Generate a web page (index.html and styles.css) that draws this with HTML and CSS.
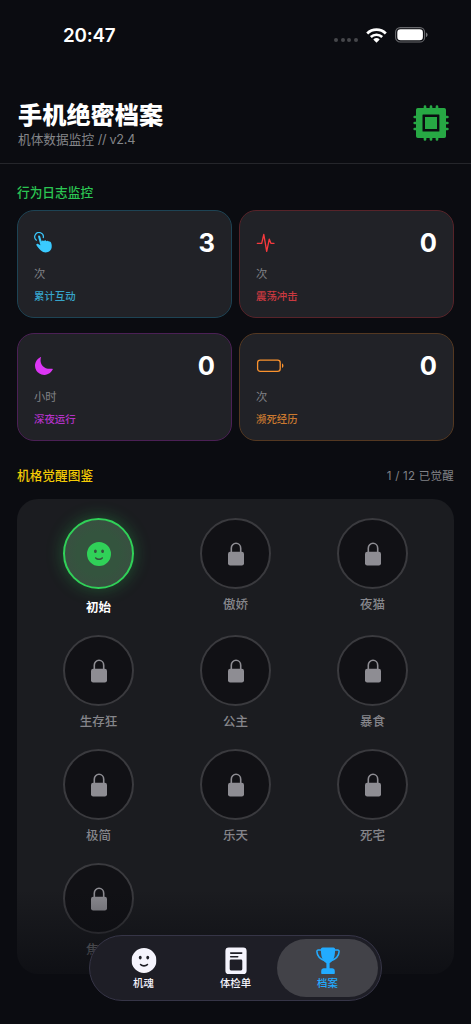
FILE: index.html
```html
<!DOCTYPE html>
<html lang="zh-CN">
<head>
<meta charset="utf-8">
<title>手机绝密档案</title>
<link rel="stylesheet" href="styles.css">
</head>
<body>
<svg class="defs" aria-hidden="true">
  <symbol id="lock" viewBox="0 0 18 24">
    <path d="M4.300 11V6.200a4.700 4.900 0 0 1 9.400 0V11" fill="none" stroke="currentColor" stroke-width="1.600"/>
    <rect x="1" y="9.800" width="16" height="13.600" rx="2.200" fill="currentColor"/>
  </symbol>
  <symbol id="face" viewBox="0 0 24 24">
    <path fill-rule="evenodd" fill="currentColor" d="M12 0a12 12 0 1 1 0 24a12 12 0 0 1 0-24zM8.400 7.400c-.8 0-1.400.8-1.400 1.800s.6 1.800 1.400 1.800s1.400-.8 1.400-1.800s-.6-1.800-1.400-1.800zM15.600 7.400c-.8 0-1.400.8-1.400 1.800s.6 1.800 1.400 1.800s1.400-.8 1.400-1.800s-.6-1.800-1.400-1.800zM8.300 15.300c-.5.4-.4.8-.1 1.100c2 2 5.600 2 7.600 0c.3-.3.400-.7-.1-1.100c-.3-.2-.6-.1-.9.1c-1.600 1.300-4 1.300-5.600 0c-.3-.2-.6-.3-.9-.1z"/>
  </symbol>
</svg>
<div class="screen">
  <div class="status">
    <span class="time">20:47</span>
    <div class="status-icons">
      <div class="dots"><i></i><i></i><i></i><i></i></div>
      <svg class="wifi" viewBox="0 0 21 15" fill="none" stroke="#fff">
        <path d="M1.200 5.400a13.400 13.400 0 0 1 18.600 0" stroke-width="2.800"/>
        <path d="M4.800 9a8.300 8.300 0 0 1 11.400 0" stroke-width="2.600"/>
        <path d="M10.500 14.800L7.300 11.500a4.700 4.700 0 0 1 6.400 0z" fill="#fff" stroke="none"/>
      </svg>
      <svg class="power" viewBox="0 0 33 16">
        <rect x=".6" y=".6" width="29" height="14.400" rx="4.600" fill="none" stroke="#68696d" stroke-width="1.100"/>
        <rect x="2.300" y="2.300" width="25.600" height="11" rx="3.200" fill="#fff"/>
        <path d="M31 5.500v4.600c2.100-.8 2.100-3.800 0-4.600z" fill="#77787c"/>
      </svg>
    </div>
  </div>

  <header class="header">
    <div>
      <h1 class="title">手机绝密档案</h1>
      <p class="subtitle">机体数据监控 <span class="version">// v2.4</span></p>
    </div>
    <svg class="chip" viewBox="0 0 36 36">
      <path d="M12 1.700V6M18 1.700V6M24 1.700V6M12 30v4.400M18 30v4.400M24 30v4.400M1.700 12H6M1.700 18H6M1.700 24H6M30 12h4.400M30 18h4.400M30 24h4.400" stroke="#27a844" stroke-width="2.700" stroke-linecap="round"/>
      <path fill="#27a844" fill-rule="evenodd" d="M4.800 3h26.400a1.800 1.800 0 0 1 1.800 1.800v26.400a1.800 1.800 0 0 1-1.800 1.800H4.800A1.800 1.800 0 0 1 3 31.200V4.800A1.800 1.800 0 0 1 4.800 3zM10 9.600q-.5 0-.5.5v15.800q0 .5.500.500h15.900q.5 0 .5-.5V10.100q0-.5-.5-.5zM12 11.900h12v12.200H12z"/>
    </svg>
  </header>

  <main class="content">
    <h2 class="section-title green">行为日志监控</h2>
    <section class="stats">
      <article class="card cyan">
        <div class="card-top">
          <svg class="stat-icon" viewBox="0 0 20 22">
            <path d="M2.400 8.200A4.300 4.300 0 1 1 9.300 5.600" fill="none" stroke="currentColor" stroke-width="1.200" stroke-linecap="round"/>
            <path fill="currentColor" d="M4.100 4.700c-.2-1.300 1.600-1.800 2-.5l1.600 5.200c.2-1.200 1.800-1.400 2.300-.3c.5-1.100 2.100-1 2.400.1c.7-.9 2.100-.6 2.500.4c.9-.4 1.900.2 2.300 1.300c1 2.800.8 5.800-1.200 7.900c-2.500 2.400-6.700 2.200-9.100-.3c-1.700-1.600-3.200-3.600-4.300-5.100c-.9-1.300.4-2.200 1.600-1.500l2.200 1.300z"/>
          </svg>
          <strong>3</strong>
        </div>
        <p class="unit">次</p><p class="label">累计互动</p>
      </article>
      <article class="card red">
        <div class="card-top">
          <svg class="stat-icon" viewBox="0 0 20 22">
            <path d="M1.300 11.300H5.700L7.800 2.500L10.700 19.400L13.300 7.200L14.900 11.300H18" fill="none" stroke="currentColor" stroke-width="1.350" stroke-linecap="round" stroke-linejoin="round"/>
          </svg>
          <strong>0</strong>
        </div>
        <p class="unit">次</p><p class="label">震荡冲击</p>
      </article>
      <article class="card purple">
        <div class="card-top">
          <svg class="stat-icon" viewBox="0 0 20 22">
            <path d="M7.100 2C5 8 9 15 18.100 13.700C19 13.600 18.900 14.200 18.700 14.600A9.300 9.300 0 1 1 6.300 2.200Q7 1.800 7.100 2z" fill="currentColor"/>
          </svg>
          <strong>0</strong>
        </div>
        <p class="unit">小时</p><p class="label">深夜运行</p>
      </article>
      <article class="card orange">
        <div class="card-top">
          <svg class="stat-icon wide" viewBox="0 0 28 22">
            <rect x="1.600" y="5.200" width="22.600" height="11.200" rx="2.600" fill="none" stroke="currentColor" stroke-width="1.300"/>
            <path d="M26 8.600v4.400c1.900-.5 1.900-3.900 0-4.400z" fill="currentColor"/>
          </svg>
          <strong>0</strong>
        </div>
        <p class="unit">次</p><p class="label">濒死经历</p>
      </article>
    </section>

    <div class="section-row">
      <h2 class="section-title yellow">机格觉醒图鉴</h2>
      <span class="count">1 / 12 已觉醒</span>
    </div>
    <section class="gallery">
      <div class="badge active"><div class="ring"><svg class="face"><use href="#face"/></svg></div><span>初始</span></div>
      <div class="badge"><div class="ring"><svg class="lock"><use href="#lock"/></svg></div><span>傲娇</span></div>
      <div class="badge"><div class="ring"><svg class="lock"><use href="#lock"/></svg></div><span>夜猫</span></div>
      <div class="badge"><div class="ring"><svg class="lock"><use href="#lock"/></svg></div><span>生存狂</span></div>
      <div class="badge"><div class="ring"><svg class="lock"><use href="#lock"/></svg></div><span>公主</span></div>
      <div class="badge"><div class="ring"><svg class="lock"><use href="#lock"/></svg></div><span>暴食</span></div>
      <div class="badge"><div class="ring"><svg class="lock"><use href="#lock"/></svg></div><span>极简</span></div>
      <div class="badge"><div class="ring"><svg class="lock"><use href="#lock"/></svg></div><span>乐天</span></div>
      <div class="badge"><div class="ring"><svg class="lock"><use href="#lock"/></svg></div><span>死宅</span></div>
      <div class="badge"><div class="ring"><svg class="lock"><use href="#lock"/></svg></div><span>焦虑</span></div>
    </section>
  </main>

  <div class="fade"></div>
  <nav class="tabs">
    <a class="tab"><svg class="tab-icon" viewBox="0 0 28 28"><use href="#face" x="1.500" y="1" width="25" height="25"/></svg><span>机魂</span></a>
    <a class="tab"><svg class="tab-icon" viewBox="0 0 28 28">
      <path fill="currentColor" fill-rule="evenodd" d="M6.800.500h14.400a3.400 3.400 0 0 1 3.400 3.400v19.800a3.400 3.400 0 0 1-3.400 3.400H6.800a3.400 3.400 0 0 1-3.400-3.400V3.900A3.400 3.400 0 0 1 6.800.500zM8.700 5.300a.8.800 0 0 0 0 1.600h11a.8.800 0 0 0 0-1.600zM8.700 9a.8.800 0 0 0 0 1.600h7a.8.800 0 0 0 0-1.600zM9 12.600q-1.300 0-1.300 1.300v8.200q0 1.300 1.300 1.300h10q1.300 0 1.300-1.300v-8.200q0-1.300-1.300-1.300z"/>
    </svg><span>体检单</span></a>
    <a class="tab selected"><svg class="tab-icon" viewBox="0 0 28 28">
      <path fill="currentColor" d="M8.600.500h10.800q1.700 0 1.700 1.600c0 6.500-.9 11.500-5.500 14.200v5h2.800q2.400 0 2.400 2.500v2.100q0 1.200-1.200 1.200H8.400q-1.200 0-1.200-1.200v-2.100q0-2.500 2.400-2.500h2.800v-5C7.800 13.600 6.900 8.600 6.900 2.100Q6.900.500 8.600.500z"/>
      <path fill="none" stroke="currentColor" stroke-width="1.500" d="M7.500 3.100H4.300q-1.500 0-1.400 1.500c.2 4 3 7.300 8.100 9.200M20.500 3.100h3.200q1.500 0 1.400 1.500c-.2 4-3 7.300-8.100 9.200"/>
    </svg><span>档案</span></a>
  </nav>
</div>
</body>
</html>
```
FILE: styles.css
```css
* { box-sizing: border-box; }
body {
  margin: 0;
  background: #0b0c11;
  font-family: Inter, "Noto Sans CJK SC", sans-serif;
  color: #fff;
}
h1, h2, p { margin: 0; }
.defs { position: absolute; width: 0; height: 0; }
.screen {
  position: relative;
  width: 471px;
  height: 1024px;
  overflow: hidden;
}
.status {
  height: 70px;
  padding: 0 43.500px 0 63px;
  display: flex;
  align-items: center;
  justify-content: space-between;
}
.time { font-size: 18.800px; font-weight: 600; letter-spacing: -.2px; }
.status-icons { display: flex; align-items: center; }
.dots { display: flex; gap: 2.400px; padding-top: 10px; margin-right: 8px; }
.dots i { width: 4px; height: 4px; border-radius: 50%; background: #46474b; }
.wifi { width: 21px; height: 15px; margin-right: 8px; }
.power { width: 33px; height: 16px; }

.header {
  height: 94px;
  padding: 32px 22px 0 18px;
  display: flex;
  justify-content: space-between;
  align-items: flex-start;
  border-bottom: 1px solid #25262b;
}
.title { font-size: 24.200px; line-height: 28px; font-weight: 900; }
.subtitle { font-size: 12.700px; line-height: 20px; color: #85868a; }
.version { letter-spacing: -.3px; }
.chip { width: 36px; height: 36px; margin-top: 3px; }

.content { padding: 19px 17px 0; }
.section-title { font-size: 12.700px; line-height: 20px; font-weight: 500; }
.green { color: #2bc653; }
.yellow { color: #f3cb05; }
.stats {
  margin-top: 7px;
  display: grid;
  grid-template-columns: 1fr 1fr;
  gap: 15px 7px;
}
.card {
  height: 108px;
  padding: 15px 16px 0;
  border: 1px solid;
  border-radius: 17px;
  background: #212227;
}
.card-top { height: 34px; display: flex; align-items: center; justify-content: space-between; }
.card-top strong { font-size: 25.500px; line-height: 34px; font-weight: 700; }
.stat-icon { width: 20px; height: 22px; }
.stat-icon.wide { width: 28px; }
.unit { margin-top: 5px; font-size: 11.300px; line-height: 18px; color: #828387; }
.label { margin-top: 5px; font-size: 10.400px; line-height: 18px; font-weight: 500; }
.cyan { border-color: #1d4354; }
.cyan .stat-icon { color: #3acaff; }
.cyan .label { color: #36a4ca; }
.red { border-color: #572329; }
.red .stat-icon { color: #f6393d; }
.red .label { color: #cb3940; }
.purple { border-color: #4b2055; }
.purple .stat-icon { color: #dc36f4; }
.purple .label { color: #b332c7; }
.orange { border-color: #543821; }
.orange .stat-icon { color: #fa922e; }
.orange .label { color: #ca7930; }

.section-row {
  margin-top: 24.500px;
  display: flex;
  align-items: center;
  justify-content: space-between;
}
.count { font-size: 11.500px; line-height: 20px; color: #808186; letter-spacing: .25px; }
.gallery {
  height: 475px;
  margin-top: 13.500px;
  padding: 19px 13px 0;
  border-radius: 21px;
  background: #1b1c20;
  display: grid;
  grid-template-columns: repeat(3, 1fr);
  grid-template-rows: 117px 114px 114px 114px;
}
.badge {
  display: flex;
  flex-direction: column;
  align-items: center;
  color: #86868b;
}
.ring {
  width: 71px;
  height: 71px;
  border: 2px solid #3a3a3e;
  border-radius: 50%;
  background: #111115;
  display: flex;
  align-items: center;
  justify-content: center;
}
.badge span { margin-top: 6px; font-size: 12.500px; line-height: 20px; font-weight: 500; }
.lock { width: 18px; height: 24px; color: #8e8d93; }
.face { width: 24px; height: 24px; color: #30d158; }
.active .ring {
  border-color: #30d158;
  background: radial-gradient(circle, #34543e 45%, #3d4b43 100%);
  box-shadow: 0 0 17px rgba(48, 209, 88, .32);
}
.active span { margin-top: 9px; color: #fff; font-weight: 700; }

.fade {
  position: absolute;
  left: 0;
  right: 0;
  bottom: 0;
  height: 134px;
  background: linear-gradient(rgba(11, 12, 17, 0), rgba(11, 12, 17, .75) 60%, #0b0c11);
}
.tabs {
  position: absolute;
  left: 89px;
  top: 935px;
  width: 293px;
  height: 66px;
  padding: 3px;
  border: 1px solid #363547;
  border-radius: 33px;
  background: #1e1e26;
  display: flex;
}
.tab {
  width: 101px;
  height: 58px;
  padding-top: 8px;
  border-radius: 29px;
  display: flex;
  flex-direction: column;
  align-items: center;
  color: #f5f4fd;
}
.tab + .tab { margin-left: -9px; }
.tab-icon { width: 28px; height: 28px; }
.tab span { margin-top: 1px; font-size: 10.400px; line-height: 16px; font-weight: 500; }
.selected { background: #424248; color: #22abff; }
```
